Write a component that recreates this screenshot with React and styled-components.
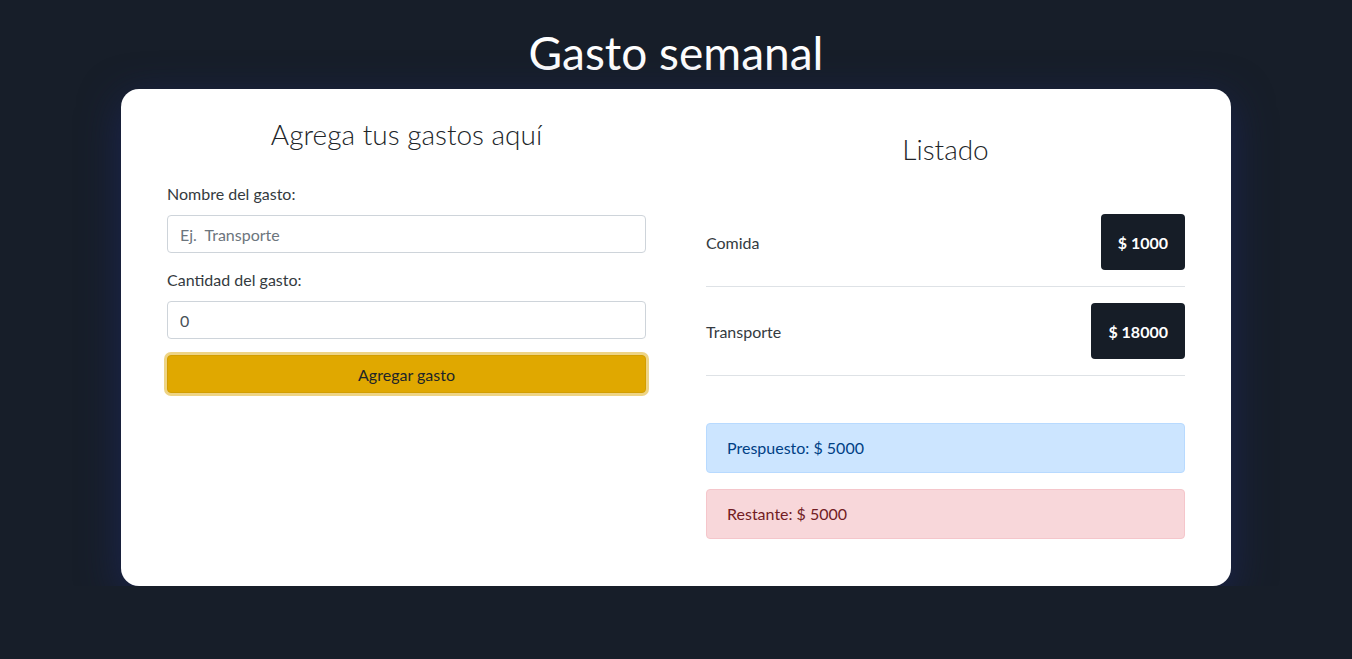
import React from 'react';
import styled, { createGlobalStyle } from 'styled-components';

const gastos = [
  { id: 1, nombre: 'Comida', cantidad: 1000 },
  { id: 2, nombre: 'Transporte', cantidad: 18000 },
];

const GlobalStyle = createGlobalStyle`
  * { box-sizing: border-box; }
  body {
    margin: 0;
    background-color: #171e29;
    font-family: 'Lato', 'Noto Sans', sans-serif;
    color: #212529;
  }
`;

const App = () => {
  return (
    <>
      <GlobalStyle />
      <StyledPage>
        <StyledTitle>Gasto semanal</StyledTitle>
        <StyledCard>
          <StyledColumn>
            <StyledHeading>Agrega tus gastos aquí</StyledHeading>
            <StyledField>
              <StyledLabel>Nombre del gasto:</StyledLabel>
              <StyledInput type='text' placeholder='Ej.  Transporte' />
            </StyledField>
            <StyledField>
              <StyledLabel>Cantidad del gasto:</StyledLabel>
              <StyledInput type='number' defaultValue='0' />
            </StyledField>
            <StyledSubmitBtn type='button'>Agregar gasto</StyledSubmitBtn>
          </StyledColumn>

          <StyledColumn>
            <StyledHeading $listado>Listado</StyledHeading>
            <StyledList>
              {gastos.map(({ id, nombre, cantidad }) => (
                <StyledItem key={id}>
                  <span>{nombre}</span>
                  <StyledBadge>$ {cantidad}</StyledBadge>
                </StyledItem>
              ))}
            </StyledList>
            <StyledAlert $variant='primary'>Prespuesto: $ 5000</StyledAlert>
            <StyledAlert $variant='danger'>Restante: $ 5000</StyledAlert>
          </StyledColumn>
        </StyledCard>
      </StyledPage>
    </>
  );
};

export default App;

const alertColors = {
  primary: { bg: '#cce5ff', border: '#b8daff', color: '#004085' },
  danger: { bg: '#f8d7da', border: '#f5c6cb', color: '#721c24' },
};

const StyledPage = styled.div`
  display: flex;
  flex-direction: column;
  align-items: center;
  padding-top: 24px;
`;

const StyledTitle = styled.h1`
  margin: 0 0 7px;
  font-size: 46px;
  font-weight: 400;
  line-height: 58px;
  color: #ffffff;
`;

const StyledCard = styled.div`
  width: 1110px;
  display: grid;
  grid-template-columns: 1fr 1fr;
  column-gap: 60px;
  padding: 28px 46px 47px;
  background-color: #ffffff;
  border-radius: 18px;
  box-shadow: 0 10px 40px rgba(28, 38, 90, 0.8);
`;

const StyledColumn = styled.div`
  display: flex;
  flex-direction: column;
`;

const StyledHeading = styled.h2`
  margin: ${({ $listado }) => ($listado ? '15px 0 32px' : '0 0 31px')};
  font-size: 28px;
  font-weight: 300;
  line-height: 34px;
  text-align: center;
  color: #212529;
`;

const StyledField = styled.div`
  display: flex;
  flex-direction: column;
  margin-bottom: 15px;
`;

const StyledLabel = styled.label`
  font-size: 16px;
  line-height: 24px;
  margin-bottom: 9px;
  color: #343a40;
`;

const StyledInput = styled.input`
  height: 38px;
  padding: 6px 12px;
  font-family: inherit;
  font-size: 16px;
  color: #495057;
  border: 1px solid #ced4da;
  border-radius: 4px;
  outline: none;

  &::placeholder {
    color: #6c757d;
  }
`;

const StyledSubmitBtn = styled.button`
  height: 38px;
  margin-top: 1px;
  font-family: inherit;
  font-size: 16px;
  color: #212529;
  background-color: #e0a800;
  border: 1px solid #d39e00;
  border-radius: 4px;
  box-shadow: 0 0 0 3px rgba(222, 170, 12, 0.5);
  cursor: pointer;
`;

const StyledList = styled.ul`
  list-style: none;
  margin: 0 0 47px;
  padding: 0;
`;

const StyledItem = styled.li`
  display: flex;
  justify-content: space-between;
  align-items: center;
  padding: 16px 0;
  border-bottom: 1px solid #dee2e6;
  font-size: 16px;
  color: #343a40;
`;

const StyledBadge = styled.span`
  display: inline-flex;
  align-items: center;
  height: 56px;
  padding: 0 17px;
  font-size: 16px;
  font-weight: 700;
  color: #ffffff;
  background-color: #161d27;
  border-radius: 4px;
`;

const StyledAlert = styled.div`
  padding: 12px 20px;
  margin-bottom: 16px;
  font-size: 16px;
  line-height: 24px;
  color: ${({ $variant }) => alertColors[$variant].color};
  background-color: ${({ $variant }) => alertColors[$variant].bg};
  border: 1px solid ${({ $variant }) => alertColors[$variant].border};
  border-radius: 4px;

  &:last-child {
    margin-bottom: 0;
  }
`;
